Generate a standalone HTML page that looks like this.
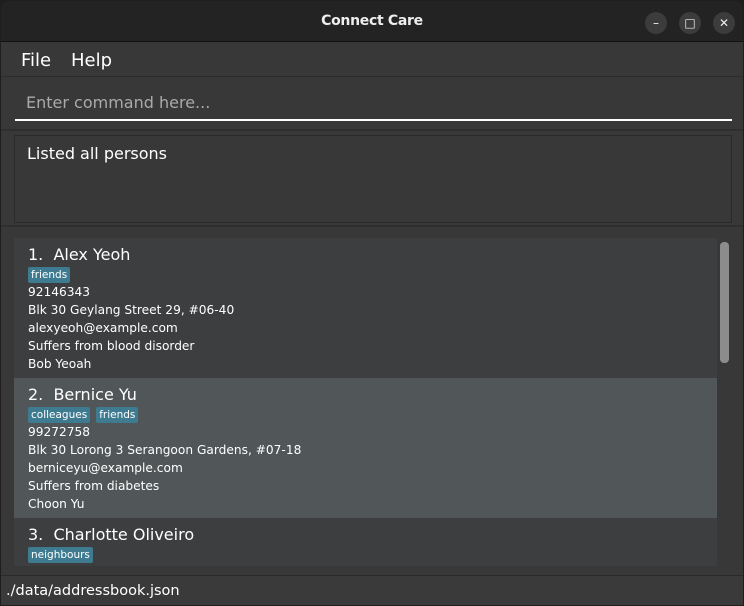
<!DOCTYPE html>
<html><head><style>
*{margin:0;padding:0;box-sizing:border-box}
body{width:744px;height:606px;background:#1e1e1e;font-family:"DejaVu Sans","Liberation Sans",sans-serif;color:#fff;overflow:hidden;position:relative}
.abs{position:absolute}
.win{left:1px;top:1px;width:742px;height:604px;background:#383838;border-radius:8px 8px 0 0;overflow:hidden}
.title{left:0;top:0;width:742px;height:41px;background:#232323;border-bottom:1px solid #111}
.title span{position:absolute;left:0;right:0;top:12px;text-align:center;font-size:14px;font-weight:bold;color:#eee;letter-spacing:-0.3px}
.btn{width:22px;height:22px;border-radius:50%;background:#3c3c3c;top:11px;color:#eee;font-size:12px;text-align:center;line-height:22px}
.menu{top:42px;left:0;width:742px;height:34px;background:#383838;border-bottom:1px solid #2b2b2b}
.menu span{position:absolute;top:7px;font-size:18px;color:#fff}
.cmd{top:77px;left:0;width:742px;height:50px;background:#383838}
.cmd .in{position:absolute;left:14px;top:10px;width:717px;height:33px;border-bottom:2px solid #fff;font-size:16px;color:#aaa;padding:5px 11px}
.res{top:128px;left:0;width:742px;height:98px;background:#383838;border-top:2px solid #2e2e2e;border-bottom:2px solid #2e2e2e}
.res .box{position:absolute;left:13px;top:4px;width:718px;height:88px;border:1px solid #2a2a2a;background:#383838;font-size:16px;padding:8px 12px}
.list{top:227px;left:0;width:742px;height:348px;background:#383838}
.cell{position:absolute;left:13px;width:703px;padding:6px 14px;font-size:12.2px;line-height:18px;color:#fff}
.cell .n{font-size:16px;line-height:21px}
.tag{display:inline-block;background:#3e7b91;color:#fff;font-size:10.5px;line-height:16px;padding:0 3px;border-radius:2px;margin-right:6px}
.sb{left:719px;top:14px;width:9px;height:121px;background:#8c8c8c;border-radius:4px}
.status{top:574px;left:0;width:742px;height:30px;background:#3a3a3a;border-top:1px solid #2a2a2a;font-size:14.5px;padding:7px 5px}
</style></head><body>
<div class="abs win">
<div class="abs title"><span>Connect Care</span>
<div class="abs btn" style="left:644px">–</div>
<div class="abs btn" style="left:678px">□</div>
<div class="abs btn" style="left:712px">✕</div></div>
<div class="abs menu"><span style="left:20px">File</span><span style="left:70px">Help</span></div>
<div class="abs cmd"><div class="in">Enter command here...</div></div>
<div class="abs res"><div class="box">Listed all persons</div></div>
<div class="abs list">
<div class="cell" style="top:10px;height:140px;background:#3d3e40">
<div class="n">1.&nbsp; Alex Yeoh</div><span class="tag">friends</span><br>92146343<br>Blk 30 Geylang Street 29, #06-40<br>alexyeoh@example.com<br>Suffers from blood disorder<br>Bob Yeoah</div>
<div class="cell" style="top:150px;height:140px;background:#515658">
<div class="n">2.&nbsp; Bernice Yu</div><span class="tag">colleagues</span><span class="tag">friends</span><br>99272758<br>Blk 30 Lorong 3 Serangoon Gardens, #07-18<br>berniceyu@example.com<br>Suffers from diabetes<br>Choon Yu</div>
<div class="cell" style="top:290px;height:48px;background:#3d3e40">
<div class="n">3.&nbsp; Charlotte Oliveiro</div><span class="tag">neighbours</span></div>
<div class="abs sb"></div>
</div>
<div class="abs status">./data/addressbook.json</div>
</div>
</body></html>
